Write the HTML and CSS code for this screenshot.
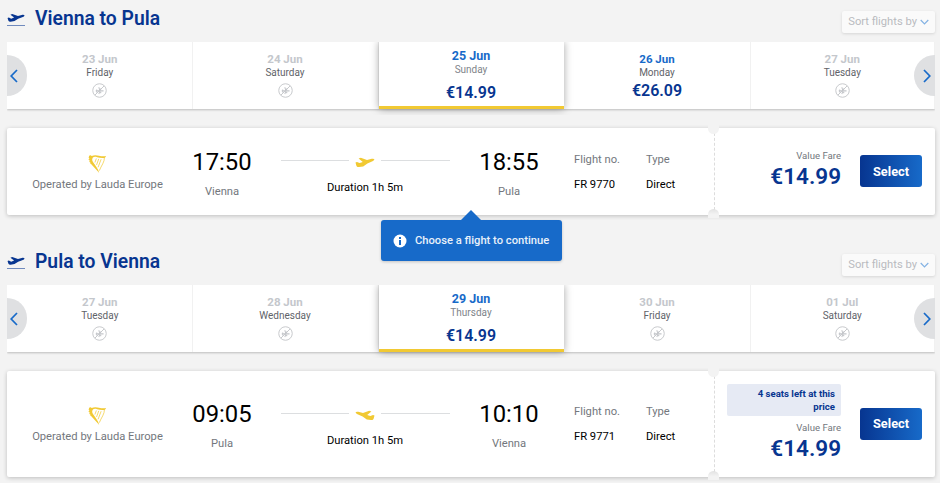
FILE: index.html
```html
<!DOCTYPE html>
<html lang="en">
<head>
    <meta charset="UTF-8">
    <meta name="viewport" content="width=device-width, initial-scale=1.0">
    <title>Select flights</title>
    <link rel="stylesheet" href="styles.css">
</head>
<body>
    <svg class="sprite" aria-hidden="true">
        <symbol id="plane" viewBox="0 0 20 12">
            <path d="M.6 5.500l1.500-.5 2.500 1.200 3.300-1.200L3.800 1.900 5.800 1.100l6.400 2.200 4.200-1.300c1.400-.4 2.700-.3 3 .4.2.8-.7 1.500-1.800 2L12.400 6.300 8.400 8.900 4 9.600c-1.200.1-2-.3-2.400-1.200z"/>
        </symbol>
        <symbol id="plane-flight" viewBox="0 0 20 11">
            <path d="M.5 5.400l1.500-.5 2.600 1.200 3.200-1.200L3.600 1.500 5.800.7l6.200 2.400 3.800-1.200c1.600-.4 3.200-.3 3.500.4.2.8-.7 1.500-1.800 2L12.400 6.600 8.200 9.400 3.900 10c-1.300.1-2.200-.3-2.500-1.300z"/>
        </symbol>
        <symbol id="no-flight" viewBox="0 0 16 16">
            <g fill="none" stroke="currentColor">
                <circle cx="8" cy="8" r="7.200"/>
                <path d="M3 13L13 3"/>
                <path d="M4 8.400h8.300M5 7v3M7.200 4.600l1.500 3.800-1.500 3.400M10 5.800L7.500 8.400l2.300 2.400" stroke-width="1.100"/>
            </g>
        </symbol>
        <symbol id="harp" viewBox="0 0 20 20">
            <path d="M1.200 1.400C2 .5 3.300.6 3.800 1.500c2.800-1 5.200-.8 7.700-.2 2.800.7 4.800.7 7.600.4l-1.200 1.700c-3 .7-5.800 0-8.300-.6-2.100-.5-3.400-.4-4.400.3C3.900 5 4.300 6.500 5.600 8.500c2.100 3.200 5 6.200 6.200 11C9.400 16.200 5.700 13 3.500 10.200L2.300 9.700l.5-.7-1.700-1.600 1-.5L.3 5l1.300-.3-.9-1.300z"/>
            <path d="M8.800 4.200L7.300 8.400M11.300 4.600L9 11M13.800 5L10.600 13.500M17.300 3c.2 5-3.200 8.500-5.400 14" fill="none" stroke="currentColor" stroke-width=".75"/>
        </symbol>
        <symbol id="chevron" viewBox="0 0 8 14">
            <path d="M7 1L1.200 7 7 13" fill="none" stroke="currentColor" stroke-width="1.700"/>
        </symbol>
    </svg>

    <section class="journey">
        <div class="journey-header">
            <div class="route">
                <svg class="route-icon"><use href="#plane"/></svg>
                <h3>Vienna to Pula</h3>
            </div>
            <button class="sort">Sort flights by
                <svg class="sort-arrow" viewBox="0 0 9 6"><path d="M.7 1l3.800 3.800L8.300 1"/></svg>
            </button>
        </div>

        <div class="dates">
            <button class="arrow prev"><svg><use href="#chevron"/></svg></button>
            <div class="date disabled">
                <span class="day">23 Jun</span>
                <span class="weekday">Friday</span>
                <svg class="no-flight"><use href="#no-flight"/></svg>
            </div>
            <div class="date disabled">
                <span class="day">24 Jun</span>
                <span class="weekday">Saturday</span>
                <svg class="no-flight"><use href="#no-flight"/></svg>
            </div>
            <div class="date selected">
                <span class="day">25 Jun</span>
                <span class="weekday">Sunday</span>
                <span class="date-price">€14.99</span>
            </div>
            <div class="date">
                <span class="day">26 Jun</span>
                <span class="weekday">Monday</span>
                <span class="date-price">€26.09</span>
            </div>
            <div class="date disabled">
                <span class="day">27 Jun</span>
                <span class="weekday">Tuesday</span>
                <svg class="no-flight"><use href="#no-flight"/></svg>
            </div>
            <button class="arrow next"><svg><use href="#chevron"/></svg></button>
        </div>

        <div class="flight">
            <div class="operator">
                <svg class="harp"><use href="#harp"/></svg>
                <span>Operated by Lauda Europe</span>
            </div>
            <div class="stop">
                <span class="time">17:50</span>
                <span class="city">Vienna</span>
            </div>
            <div class="duration">
                <div class="line">
                    <svg class="line-plane"><use href="#plane-flight"/></svg>
                </div>
                <span>Duration 1h 5m</span>
            </div>
            <div class="stop">
                <span class="time">18:55</span>
                <span class="city">Pula</span>
            </div>
            <div class="detail number">
                <span class="label">Flight no.</span>
                <span>FR 9770</span>
            </div>
            <div class="detail">
                <span class="label">Type</span>
                <span>Direct</span>
            </div>
            <div class="fare">
                <div class="fare-info">
                    <span class="fare-name">Value Fare</span>
                    <span class="price">€14.99</span>
                </div>
                <button class="select">Select</button>
            </div>
        </div>

        <div class="tooltip">
            <svg class="info" viewBox="0 0 14 14">
                <circle cx="7" cy="7" r="6.500"/>
                <path d="M6 3h2v2H6zM6 6h2v5H6z"/>
            </svg>
            Choose a flight to continue
        </div>
    </section>

    <section class="journey">
        <div class="journey-header">
            <div class="route">
                <svg class="route-icon"><use href="#plane"/></svg>
                <h3>Pula to Vienna</h3>
            </div>
            <button class="sort">Sort flights by
                <svg class="sort-arrow" viewBox="0 0 9 6"><path d="M.7 1l3.800 3.800L8.300 1"/></svg>
            </button>
        </div>

        <div class="dates">
            <button class="arrow prev"><svg><use href="#chevron"/></svg></button>
            <div class="date disabled">
                <span class="day">27 Jun</span>
                <span class="weekday">Tuesday</span>
                <svg class="no-flight"><use href="#no-flight"/></svg>
            </div>
            <div class="date disabled">
                <span class="day">28 Jun</span>
                <span class="weekday">Wednesday</span>
                <svg class="no-flight"><use href="#no-flight"/></svg>
            </div>
            <div class="date selected">
                <span class="day">29 Jun</span>
                <span class="weekday">Thursday</span>
                <span class="date-price">€14.99</span>
            </div>
            <div class="date disabled">
                <span class="day">30 Jun</span>
                <span class="weekday">Friday</span>
                <svg class="no-flight"><use href="#no-flight"/></svg>
            </div>
            <div class="date disabled">
                <span class="day">01 Jul</span>
                <span class="weekday">Saturday</span>
                <svg class="no-flight"><use href="#no-flight"/></svg>
            </div>
            <button class="arrow next"><svg><use href="#chevron"/></svg></button>
        </div>

        <div class="flight tall">
            <div class="operator">
                <svg class="harp"><use href="#harp"/></svg>
                <span>Operated by Lauda Europe</span>
            </div>
            <div class="stop">
                <span class="time">09:05</span>
                <span class="city">Pula</span>
            </div>
            <div class="duration">
                <div class="line">
                    <svg class="line-plane back"><use href="#plane-flight"/></svg>
                </div>
                <span>Duration 1h 5m</span>
            </div>
            <div class="stop">
                <span class="time">10:10</span>
                <span class="city">Vienna</span>
            </div>
            <div class="detail number">
                <span class="label">Flight no.</span>
                <span>FR 9771</span>
            </div>
            <div class="detail">
                <span class="label">Type</span>
                <span>Direct</span>
            </div>
            <div class="fare">
                <div class="fare-info">
                    <span class="seats">4 seats left at this price</span>
                    <span class="fare-name">Value Fare</span>
                    <span class="price">€14.99</span>
                </div>
                <button class="select">Select</button>
            </div>
        </div>
    </section>
</body>
</html>
```
FILE: styles.css
```css
* {
    box-sizing: border-box;
}
body {
    margin: 0;
    padding: 0 5px 0 7px;
    background-color: #f3f3f3;
    font-family: Roboto, Arial, sans-serif;
    font-size: 11.2px;
    overflow: hidden;
}
button {
    border: none;
    padding: 0;
    font-family: inherit;
    cursor: pointer;
}
svg {
    display: block;
    fill: currentColor;
}
.sprite {
    display: none;
}
.journey {
    position: relative;
    margin-bottom: 28px;
}

/* Header */
.journey-header {
    display: flex;
    justify-content: space-between;
    height: 42px;
}
.route {
    display: flex;
    align-items: flex-start;
    gap: 10px;
    padding-top: 8px;
    color: #073590;
}
.route-icon {
    width: 18px;
    height: 14px;
    margin-top: 4px;
    border-bottom: 1px solid #708abd;
}
h3 {
    margin: 0;
    font-size: 19.3px;
    line-height: 22px;
    font-weight: 600;
}
.sort {
    display: flex;
    align-items: center;
    gap: 3px;
    height: 22px;
    margin-top: 11px;
    padding: 0 6px 2px 6px;
    border-radius: 2px;
    background-color: #fafafa;
    box-shadow: 0 1px 3px rgba(0, 0, 0, 0.12);
    color: #b9bbbf;
    font-size: 11.2px;
    white-space: nowrap;
}
.sort-arrow {
    width: 9px;
    height: 6px;
    margin-top: 2px;
    fill: none;
    stroke: #83b2e3;
    stroke-width: 1.2;
}

/* Date carousel */
.dates {
    position: relative;
    display: grid;
    grid-template-columns: 184.5px 186px 186px 186px 1fr;
    height: 67px;
    padding-left: 1px;
    background-color: #fff;
    box-shadow: 0 1px 2px rgba(0, 0, 0, 0.22);
    clip-path: inset(0 0 -6px 0);
}
.date {
    display: flex;
    flex-direction: column;
    align-items: center;
    padding-top: 10px;
    border-right: 1px solid #f1f1f1;
}
.day {
    color: #176ac9;
    font-size: 11.5px;
    line-height: 14px;
    font-weight: 700;
}
.weekday {
    color: #5f6369;
    font-size: 10px;
    line-height: 13px;
}
.date-price {
    color: #073590;
    font-size: 16px;
    line-height: 23px;
    font-weight: 600;
}
.disabled .day {
    color: #c4c7cc;
}
.selected {
    z-index: 1;
    margin-right: 1px;
    padding-top: 7px;
    border-right: none;
    border-bottom: 3px solid #f1c933;
    background-color: #fff;
    box-shadow: 0 0 8px rgba(0, 0, 0, 0.35);
}
.selected .day {
    font-size: 12.5px;
}
.selected .weekday {
    color: #80848a;
}
.selected .date-price {
    margin-top: 5px;
}
.no-flight {
    width: 15px;
    height: 15px;
    margin-top: 4px;
    color: #c4c6ca;
}
.arrow {
    position: absolute;
    top: 13px;
    z-index: 2;
    display: flex;
    align-items: center;
    height: 41px;
    background-color: #dfe0e2;
    color: #176ac9;
}
.arrow svg {
    width: 8px;
    height: 14px;
}
.prev {
    left: 0;
    width: 20px;
    padding-left: 3px;
    border-radius: 0 21px 21px 0;
}
.next {
    right: 0;
    width: 21px;
    padding-left: 9px;
    border-radius: 21px 0 0 21px;
}
.next svg {
    transform: scaleX(-1);
}

/* Flight card */
.flight {
    display: grid;
    grid-template-columns: 181px 68px 218px 70px 102px 68px 221px;
    align-items: center;
    height: 87px;
    margin-top: 19px;
    border-radius: 2px;
    background-color: #fff;
    box-shadow: 0 1px 4px rgba(0, 0, 0, 0.22);
    color: #000;
}
.tall {
    height: 106px;
}
.operator,
.stop,
.duration {
    display: flex;
    flex-direction: column;
    align-items: center;
}
.operator {
    padding-top: 2px;
    color: #73777d;
    line-height: 14px;
}
.harp {
    width: 19px;
    height: 20px;
    margin-bottom: 4px;
    color: #f1c933;
}
.stop {
    padding-top: 3px;
}
.time {
    font-size: 23.8px;
    line-height: 28px;
}
.city {
    margin-top: 8px;
    padding-top: 1px;
    color: #73777d;
    line-height: 14px;
}
.duration {
    padding-top: 8px;
    line-height: 14px;
}
.line {
    display: flex;
    align-items: center;
    gap: 6px;
    width: 169px;
    margin-bottom: 13px;
}
.line::before,
.line::after {
    content: "";
    flex: 1;
    height: 1px;
    margin-bottom: 3px;
    background-color: #dcdee0;
}
.line-plane {
    width: 20px;
    height: 11px;
    color: #f1c933;
}
.back {
    transform: scaleX(-1);
}
.detail {
    display: flex;
    flex-direction: column;
    gap: 11px;
    padding-top: 1px;
    line-height: 14px;
}
.number {
    padding-left: 30px;
}
.label {
    color: #73777d;
}
.fare {
    position: relative;
    display: flex;
    align-items: center;
    justify-content: flex-end;
    gap: 19px;
    height: 100%;
    padding-right: 13px;
    border-left: 1px dashed #dcdcdc;
}
/* ticket notches */
.fare::before,
.fare::after {
    content: "";
    position: absolute;
    left: -7px;
    width: 11px;
    height: 9px;
    background-color: #f3f3f3;
}
.fare::before {
    top: -3px;
    border-radius: 0 0 6px 6px;
}
.fare::after {
    bottom: -3px;
    border-radius: 6px 6px 0 0;
    background-image: linear-gradient(#e2e2e2, #f3f3f3 60%);
}
.fare-info {
    display: flex;
    flex-direction: column;
    align-items: flex-end;
    width: 114px;
    padding-bottom: 5px;
}
.tall .fare-info {
    padding-bottom: 3px;
}
.tall .duration {
    padding-top: 9px;
}
.seats {
    width: 114px;
    height: 32px;
    margin-bottom: 5px;
    padding: 3px 6px 3px 24px;
    border-radius: 2px;
    background-color: #e6eaf4;
    color: #073590;
    font-size: 9.6px;
    line-height: 13px;
    font-weight: 700;
    text-align: right;
}
.fare-name {
    color: #73777d;
    font-size: 9.6px;
    line-height: 14px;
}
.price {
    color: #073590;
    font-size: 22.5px;
    line-height: 26px;
    font-weight: 600;
}
.select {
    width: 62px;
    height: 32px;
    margin-bottom: 1px;
    border-radius: 3px;
    background: linear-gradient(90deg, #073590, #176ac9);
    color: #fff;
    font-size: 12.8px;
    font-weight: 700;
}

/* Tooltip under the first card */
.tooltip {
    position: absolute;
    top: 220px;
    left: 374px;
    z-index: 3;
    display: flex;
    align-items: center;
    gap: 8px;
    width: 181px;
    height: 41px;
    padding-left: 12px;
    border-radius: 3px;
    background-color: #176ac9;
    box-shadow: 0 1px 3px rgba(0, 0, 0, 0.2);
    color: #e9f1fa;
    font-weight: 500;
    white-space: nowrap;
}
.tooltip::before {
    content: "";
    position: absolute;
    top: -10px;
    left: 80px;
    border: 10px solid transparent;
    border-top: none;
    border-bottom-color: #176ac9;
}
.info {
    width: 14px;
    height: 14px;
    fill: #fff;
}
.info path {
    fill: #176ac9;
}
```
